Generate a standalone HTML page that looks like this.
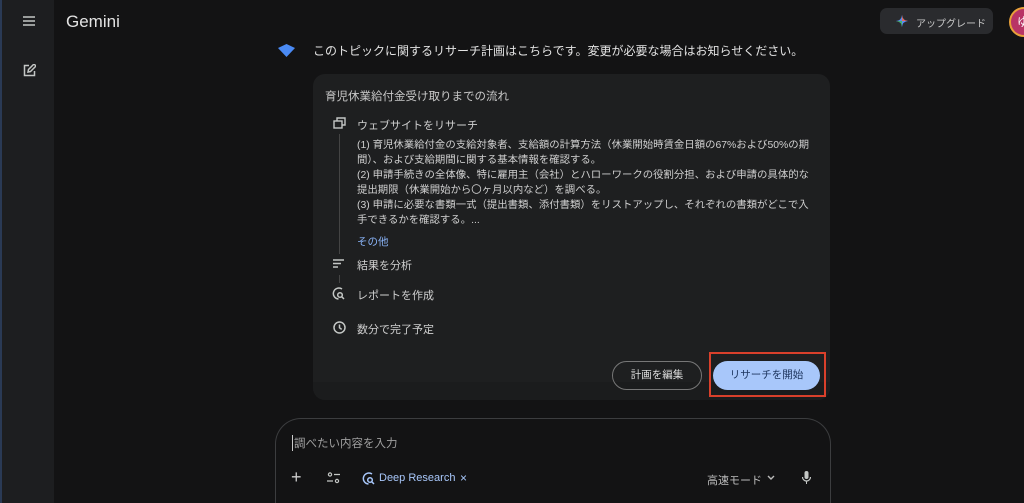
<!DOCTYPE html>
<html style="width:1024px;height:503px;overflow:hidden"><head><meta charset="utf-8"><style>
*{margin:0;padding:0;box-sizing:border-box}
body{width:1024px;height:503px;overflow:hidden;background:#131314;font-family:"Liberation Sans","Noto Sans CJK JP",sans-serif;color:#e3e3e3;position:relative}
.side{position:absolute;left:0;top:0;width:54px;height:503px;background:#1d1e20;border-left:2px solid #2a3a55}
.abs{position:absolute}
.card{position:absolute;left:313px;top:74px;width:517px;height:326px;background:#1e1f20;border-radius:12px}
.t{font-size:11px;color:#c8c8c8}
.step{font-size:11px;color:#d0d0d0}
.body{position:absolute;left:357px;top:138px;width:460px;font-size:10.4px;line-height:15px;color:#cfcfcf}
</style></head><body>
<div class="side">
<svg class="abs" style="left:21px;top:16px" width="12" height="10"><path d="M0 1h12M0 5h12M0 9h12" stroke="#c4c7c5" stroke-width="1.6"/></svg>
<svg class="abs" style="left:21px;top:64px" width="13" height="13" fill="none" stroke="#c4c7c5" stroke-width="1.5"><path d="M6 1.5H1.5v10h10V7"/><path d="M5 8l.5-2.5L11 0l2 2-5.5 5.5z"/></svg>
</div>
<div class="abs" style="left:66px;top:12px;font-size:17px;color:#e3e3e3">Gemini</div>
<div class="abs" style="left:880px;top:8px;width:113px;height:26px;background:#2a2b2e;border-radius:7px;font-size:10px;color:#c8c8c8">
<svg class="abs" style="left:16px;top:7px" width="12" height="12"><path d="M6 0Q6.5 5.5 12 6Q6.5 6.5 6 12Q5.5 6.5 0 6Q5.5 5.5 6 0z" fill="#5b8df0"/><path d="M6 0Q6.5 5.5 12 6L6 6z" fill="#e36a5a"/><path d="M0 6Q5.5 6.5 6 12L6 6z" fill="#45b06a"/></svg>
<span class="abs" style="left:36px;top:7px">アップグレード</span></div>
<div class="abs" style="left:1009px;top:7px;width:30px;height:30px;border-radius:50%;background:#b83466;border:2px solid #e8a13a;color:#fff;font-size:12px;line-height:26px;padding-left:6px">ゆ</div>
<svg class="abs" style="left:278px;top:44px" width="17" height="13"><path d="M8.5 0L17 4L8.5 13L0 4z" fill="#4a8af4"/></svg>
<div class="abs" style="left:313px;top:42px;font-size:12px;color:#e3e3e3">このトピックに関するリサーチ計画はこちらです。変更が必要な場合はお知らせください。</div>
<div class="card"></div>
<div class="abs" style="left:313px;top:382px;width:517px;height:18px;background:#1b1c1d;border-radius:0 0 12px 12px"></div>
<div class="abs t" style="left:325px;top:88px;font-size:11.5px">育児休業給付金受け取りまでの流れ</div>
<svg class="abs" style="left:333px;top:117px" width="13" height="12" fill="none" stroke="#c4c7c5" stroke-width="1.4"><rect x="1" y="4" width="8" height="7"/><path d="M4 4V1h8v7H9"/></svg>
<div class="abs step" style="left:357px;top:117px">ウェブサイトをリサーチ</div>
<div class="abs" style="left:339px;top:134px;width:1px;height:120px;background:#444"></div>
<div class="body">(1) 育児休業給付金の支給対象者、支給額の計算方法（休業開始時賃金日額の67%および50%の期間）、および支給期間に関する基本情報を確認する。<br>(2) 申請手続きの全体像、特に雇用主（会社）とハローワークの役割分担、および申請の具体的な提出期限（休業開始から〇ヶ月以内など）を調べる。<br>(3) 申請に必要な書類一式（提出書類、添付書類）をリストアップし、それぞれの書類がどこで入手できるかを確認する。...</div>
<div class="abs" style="left:357px;top:234px;font-size:10.5px;color:#8ab4f8">その他</div>
<svg class="abs" style="left:333px;top:259px" width="11" height="9"><path d="M0 1h11M0 4.5h8M0 8h5" stroke="#c4c7c5" stroke-width="1.4"/></svg>
<div class="abs step" style="left:357px;top:257px">結果を分析</div>
<div class="abs" style="left:339px;top:275px;width:1px;height:8px;background:#444"></div>
<svg class="abs" style="left:332px;top:287px" width="13" height="13" fill="none" stroke="#c4c7c5" stroke-width="1.5"><path d="M10 2A5.5 5.5 0 1 0 6.5 12"/><circle cx="8" cy="8" r="2.3"/><path d="M9.7 9.7L12 12"/></svg>
<div class="abs step" style="left:357px;top:287px">レポートを作成</div>
<svg class="abs" style="left:333px;top:321px" width="13" height="13" fill="none" stroke="#c4c7c5" stroke-width="1.5"><circle cx="6.5" cy="6.5" r="5.5"/><path d="M6.5 3.5v3.3l2.2 1.6"/></svg>
<div class="abs step" style="left:357px;top:321px">数分で完了予定</div>
<div class="abs" style="left:612px;top:361px;width:90px;height:29px;border:1px solid #777;border-radius:15px;font-size:10.5px;color:#ddd;text-align:center;line-height:27px">計画を編集</div>
<div class="abs" style="left:713px;top:361px;width:107px;height:29px;background:#a8c7fa;border-radius:15px;font-size:10.5px;color:#1f3760;text-align:center;line-height:29px">リサーチを開始</div>
<div class="abs" style="left:709px;top:352px;width:117px;height:45px;border:2px solid #d9402b"></div>
<div class="abs" style="left:275px;top:418px;width:556px;height:85px;border:1px solid #3c3d3f;border-bottom:none;border-radius:26px 26px 0 0;background:#131314"></div>
<div class="abs" style="left:292px;top:435px;font-size:11.5px;color:#a0a0a0;border-left:1px solid #ccc;padding-left:1px">調べたい内容を入力</div>
<div class="abs" style="left:291px;top:467px;font-size:18px;color:#ccc;line-height:20px">+</div>
<svg class="abs" style="left:327px;top:472px" width="13" height="12" fill="none" stroke="#c4c7c5" stroke-width="1.2"><circle cx="3" cy="2.5" r="1.6"/><path d="M7 2.5h6M0 9h6"/><circle cx="10" cy="9" r="1.6"/></svg>
<svg class="abs" style="left:362px;top:472px" width="13" height="13" fill="none" stroke="#a8c7fa" stroke-width="1.5"><path d="M10 2A5.5 5.5 0 1 0 6.5 12"/><circle cx="8" cy="8" r="2.3"/><path d="M9.7 9.7L12 12"/></svg>
<div class="abs" style="left:379px;top:472px;font-size:11px;color:#a8c7fa">Deep Research</div>
<div class="abs" style="left:460px;top:471px;font-size:12px;color:#a8c7fa">×</div>
<div class="abs" style="left:707px;top:472px;font-size:11px;color:#bbb">高速モード</div>
<svg class="abs" style="left:767px;top:475px" width="8" height="6" fill="none" stroke="#bbb" stroke-width="1.4"><path d="M1 1l3 3 3-3"/></svg>
<svg class="abs" style="left:802px;top:471px" width="9" height="14" fill="#c4c7c5"><rect x="2.5" y="0" width="4" height="8" rx="2"/><path d="M0.5 6a4 4 0 0 0 8 0" fill="none" stroke="#c4c7c5" stroke-width="1.2"/><rect x="4" y="10" width="1" height="3"/></svg>
</body></html>
